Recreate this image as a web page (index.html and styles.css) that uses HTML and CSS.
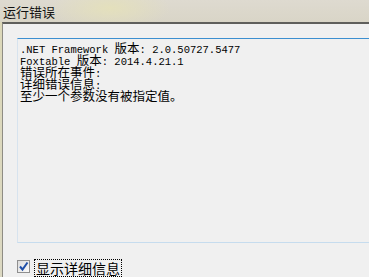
FILE: index.html
```html
<!DOCTYPE html>
<html lang="zh-CN">
<head>
    <meta charset="UTF-8">
    <title>运行错误</title>
    <link rel="stylesheet" href="styles.css">
</head>
<body>
    <div class="window">
        <header class="title-bar">
            <span class="title">运行错误</span>
        </header>
        <div class="frame">
            <div class="client">
                <div class="error-box">
                    <div class="line">.NET Framework <span class="cjk">版本</span>: 2.0.50727.5477</div>
                    <div class="line">Foxtable <span class="cjk">版本</span>: 2014.4.21.1</div>
                    <div class="line"><span class="cjk">错误所在事件</span>:</div>
                    <div class="line"><span class="cjk">详细错误信息</span>:</div>
                    <div class="line"><span class="cjk">至少一个参数没有被指定值。</span></div>
                </div>
                <label class="detail-check">
                    <span class="check-box">
                        <svg width="11" height="11" viewBox="0 0 11 11">
                            <path d="M2 5.5 L4.5 8.5 L9.5 1.5" fill="none" stroke="#1f4fa8" stroke-width="2"/>
                        </svg>
                    </span>
                    <span class="check-label">显示详细信息</span>
                </label>
            </div>
        </div>
    </div>
</body>
</html>
```

FILE: styles.css
```css
/* Base */
* {
    margin: 0;
    padding: 0;
    box-sizing: border-box;
}

body {
    width: 369px;
    height: 277px;
    overflow: hidden;
    font-family: "Liberation Mono", "Noto Sans CJK SC", monospace;
    color: #000;
}

.window {
    height: 100%;
    display: flex;
    flex-direction: column;
    background: linear-gradient(100deg, #dcd8b8 0%, #dcd9c9 20%, #d8d4c6 100%);
}

/* Title bar */
.title-bar {
    height: 25px;
    padding: 3px 0 0 3px;
    background: radial-gradient(ellipse 60px 22px at 110px 8px, #e4e0bc 0%, rgba(228,224,188,0) 100%),
                linear-gradient(180deg, #dedad0 0%, #d9d5c7 100%);
}

.title {
    font-family: "Noto Sans CJK SC", sans-serif;
    font-size: 13px;
    line-height: 18px;
    color: #111;
}

/* Frame */
.frame {
    flex: 1;
    display: flex;
    padding-left: 2px;
}

.client {
    flex: 1;
    background: #f0f0f0;
    border-top: 2px solid #5f5f5c;
    border-left: 1px solid #8e8c84;
    padding: 14px 0 0 14px;
    display: flex;
    flex-direction: column;
}

/* Error text */
.error-box {
    height: 205px;
    border-top: 1px solid #3c8fd0;
    border-left: 1px solid #d7e3ee;
    border-bottom: 1px solid #c6dcee;
    padding: 3px 0 0 2px;
    font-size: 10.5px;
}

.line {
    white-space: nowrap;
    height: 12px;
    line-height: 12px;
}

.cjk {
    font-family: "Noto Sans CJK SC", sans-serif;
    font-size: 12.5px;
    line-height: 12px;
}

/* Checkbox */
.detail-check {
    display: flex;
    align-items: flex-start;
    gap: 4px;
    margin-top: 16px;
}

.check-box {
    width: 13px;
    height: 13px;
    border: 1px solid #8f8f8f;
    background: linear-gradient(135deg, #dcdcdc, #fbfbfb);
    display: flex;
    align-items: center;
    justify-content: center;
    margin-top: 1px;
}

.check-label {
    font-family: "Noto Sans CJK SC", sans-serif;
    font-size: 14px;
    line-height: 16px;
    padding: 0 1px;
    border: 1px dotted #000;
}
```
